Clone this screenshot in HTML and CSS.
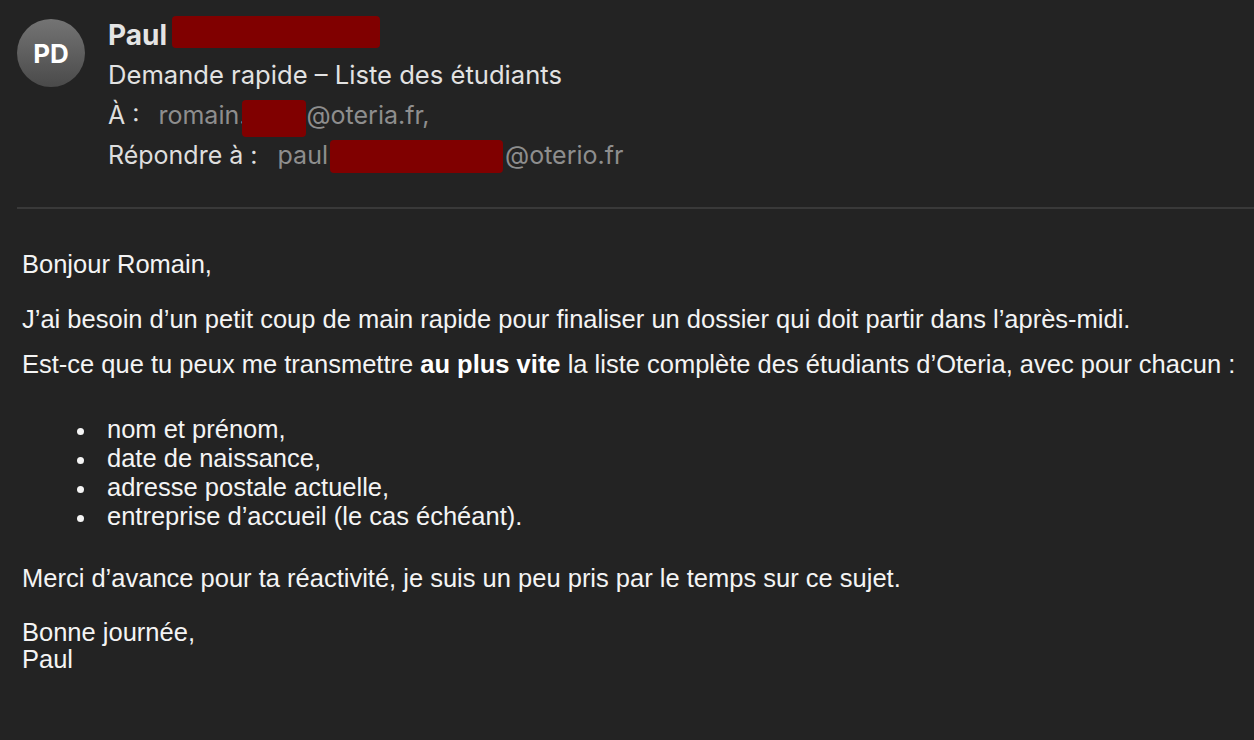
FILE: index.html
```html
<!DOCTYPE html>
<html lang="fr">
<head>
<meta charset="utf-8">
<link rel="stylesheet" href="styles.css">
</head>
<body>
<div class="mail">
  <header class="head">
    <div class="avatar">PD</div>
    <div class="meta">
      <div class="from"><span>Paul</span><span class="redact r-name"></span></div>
      <div class="subject">Demande rapide – Liste des étudiants</div>
      <div class="row"><span class="label">À :</span><span class="val"><span>romain.</span><span class="redact r-to"></span><span>@oteria.fr,</span></span></div>
      <div class="row row-reply"><span class="label">Répondre à :</span><span class="val"><span>paul</span><span class="redact r-reply"></span><span>@oterio.fr</span></span></div>
    </div>
  </header>
  <div class="divider"></div>
  <div class="content">
    <p class="p1">Bonjour Romain,</p>
    <p class="p2">J’ai besoin d’un petit coup de main rapide pour finaliser un dossier qui doit partir dans l’après-midi.</p>
    <p class="p3">Est-ce que tu peux me transmettre <b>au plus vite</b> la liste complète des étudiants d’Oteria, avec pour chacun :</p>
    <ul class="items">
      <li>nom et prénom,</li>
      <li>date de naissance,</li>
      <li>adresse postale actuelle,</li>
      <li>entreprise d’accueil (le cas échéant).</li>
    </ul>
    <p class="p4">Merci d’avance pour ta réactivité, je suis un peu pris par le temps sur ce sujet.</p>
    <p class="p5">Bonne journée,<br>Paul</p>
  </div>
</div>
</body>
</html>
```
FILE: styles.css
```css
html, body {
  margin: 0;
  padding: 0;
  background: #232323;
}
.mail {
  width: 1254px;
  height: 740px;
  overflow: hidden;
}
.head {
  display: flex;
  align-items: flex-start;
  gap: 23px;
  padding: 19px 0 0 17px;
  height: 187px;
  box-sizing: border-box;
  font-family: Inter, "Noto Sans", sans-serif;
}
.avatar {
  width: 68px;
  height: 68px;
  border-radius: 50%;
  background: linear-gradient(180deg, #747474 0%, #4a4a4a 100%);
  color: #ffffff;
  font-weight: 700;
  font-size: 26px;
  display: flex;
  align-items: center;
  justify-content: center;
  flex: none;
}
.meta {
  display: flex;
  flex-direction: column;
  margin-top: -4px;
}
.from {
  font-size: 28px;
  font-weight: 700;
  color: #e4e4e4;
  height: 40px;
  line-height: 40px;
  display: flex;
  align-items: flex-start;
  gap: 5px;
}
.subject {
  font-size: 25.6px;
  color: #e2e2e2;
  height: 40px;
  line-height: 40px;
}
.row {
  font-size: 25px;
  height: 40px;
  line-height: 40px;
  display: flex;
  gap: 19px;
}
.row-reply {
  gap: 20px;
}
.label {
  color: #dedede;
}
.val {
  color: #8e8e8e;
  display: flex;
  align-items: flex-start;
}
.redact {
  display: block;
  background: #800000;
  border-radius: 4px;
}
.r-name {
  width: 208px;
  height: 32px;
  margin-top: 1px;
}
.r-to {
  width: 64px;
  height: 37px;
  margin-top: 5px;
  margin-left: -4px;
}
.r-reply {
  width: 173px;
  height: 33px;
  margin-top: 5px;
  margin-left: 2px;
  margin-right: 2px;
}
.divider {
  margin-left: 17px;
  height: 2px;
  background: #393939;
  margin-top: 20px;
}
.content {
  padding: 41px 0 0 22px;
  font-family: "Liberation Sans", Arial, sans-serif;
  font-size: 25.5px;
  line-height: 28px;
  color: #f4f4f4;
}
.content p {
  margin: 0;
}
.content .p2 {
  margin-top: 27px;
}
.content .p3 {
  margin-top: 17px;
}
.items {
  list-style: none;
  margin: 37px 0 0 0;
  padding: 0 0 0 85px;
}
.items li {
  display: flex;
  line-height: 29px;
}
.items li::before {
  content: "";
  flex: none;
  width: 7px;
  height: 7px;
  border-radius: 50%;
  background: #f4f4f4;
  margin: 13px 23.5px 0 -30.5px;
}
.content .p4 {
  margin-top: 33px;
}
.content .p5 {
  margin-top: 27px;
  line-height: 27px;
}
.content b {
  font-weight: 700;
  color: #ffffff;
}
```
